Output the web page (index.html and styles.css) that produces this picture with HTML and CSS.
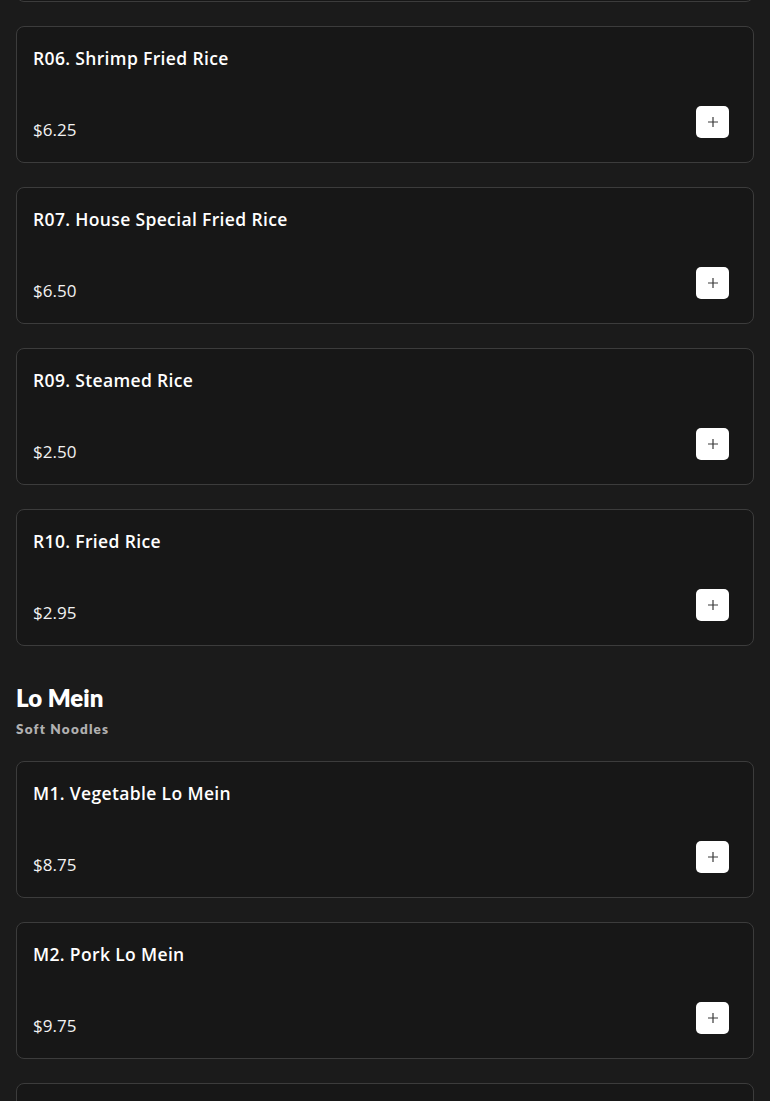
FILE: index.html
```html
<!DOCTYPE html>
<html>
<head>
<meta charset="utf-8">
<link rel="stylesheet" href="styles.css">
</head>
<body>
<main class="menu">
  <section class="section first">
    <div class="list">
      <article class="card">
        <h3 class="name">R05. Beef Fried Rice</h3>
        <div class="row"><span class="price">$6.25</span><button class="add" aria-label="Add"><svg viewBox="0 0 12 12" width="12" height="12"><path d="M6 1v10M1 6h10" stroke="#3a3a3a" stroke-width="1.2" fill="none"/></svg></button></div>
      </article>
      <article class="card">
        <h3 class="name">R06. Shrimp Fried Rice</h3>
        <div class="row"><span class="price">$6.25</span><button class="add" aria-label="Add"><svg viewBox="0 0 12 12" width="12" height="12"><path d="M6 1v10M1 6h10" stroke="#3a3a3a" stroke-width="1.2" fill="none"/></svg></button></div>
      </article>
      <article class="card">
        <h3 class="name">R07. House Special Fried Rice</h3>
        <div class="row"><span class="price">$6.50</span><button class="add" aria-label="Add"><svg viewBox="0 0 12 12" width="12" height="12"><path d="M6 1v10M1 6h10" stroke="#3a3a3a" stroke-width="1.2" fill="none"/></svg></button></div>
      </article>
      <article class="card">
        <h3 class="name">R09. Steamed Rice</h3>
        <div class="row"><span class="price">$2.50</span><button class="add" aria-label="Add"><svg viewBox="0 0 12 12" width="12" height="12"><path d="M6 1v10M1 6h10" stroke="#3a3a3a" stroke-width="1.2" fill="none"/></svg></button></div>
      </article>
      <article class="card">
        <h3 class="name">R10. Fried Rice</h3>
        <div class="row"><span class="price">$2.95</span><button class="add" aria-label="Add"><svg viewBox="0 0 12 12" width="12" height="12"><path d="M6 1v10M1 6h10" stroke="#3a3a3a" stroke-width="1.2" fill="none"/></svg></button></div>
      </article>
    </div>
  </section>
  <section class="section">
    <header class="section-head">
      <h2 class="section-title">Lo Mein</h2>
      <p class="section-sub">Soft Noodles</p>
    </header>
    <div class="list">
      <article class="card">
        <h3 class="name">M1. Vegetable Lo Mein</h3>
        <div class="row"><span class="price">$8.75</span><button class="add" aria-label="Add"><svg viewBox="0 0 12 12" width="12" height="12"><path d="M6 1v10M1 6h10" stroke="#3a3a3a" stroke-width="1.2" fill="none"/></svg></button></div>
      </article>
      <article class="card">
        <h3 class="name">M2. Pork Lo Mein</h3>
        <div class="row"><span class="price">$9.75</span><button class="add" aria-label="Add"><svg viewBox="0 0 12 12" width="12" height="12"><path d="M6 1v10M1 6h10" stroke="#3a3a3a" stroke-width="1.2" fill="none"/></svg></button></div>
      </article>
      <article class="card">
        <h3 class="name">M3. Chicken Lo Mein</h3>
        <div class="row"><span class="price">$9.75</span><button class="add" aria-label="Add"><svg viewBox="0 0 12 12" width="12" height="12"><path d="M6 1v10M1 6h10" stroke="#3a3a3a" stroke-width="1.2" fill="none"/></svg></button></div>
      </article>
    </div>
  </section>
</main>
</body>
</html>
```
FILE: styles.css
```css
* { box-sizing: border-box; }
html, body { margin: 0; padding: 0; background: #1b1b1b; }
body { font-family: "Open Sans", "Liberation Sans", sans-serif; color: #fff; }
.menu { padding: 0 16px; margin-top: -135px; display: flex; flex-direction: column; gap: 38px; }
.list { display: flex; flex-direction: column; gap: 24px; }
.card {
  background: #171717;
  border: 1px solid #3c3c3c;
  border-radius: 8px;
  height: 137px;
  padding: 19px 24px 23px 16px;
  display: flex;
  flex-direction: column;
  justify-content: space-between;
}
.name { margin: 0; font-size: 17.5px; font-weight: 600; line-height: 24px; letter-spacing: 0.35px; }
.row { display: flex; justify-content: space-between; align-items: flex-end; }
.price { font-size: 17px; line-height: 18px; font-weight: 400; color: #f2f2f2; }
.add {
  width: 33px; height: 32px; border: 0; border-radius: 5px; background: #fff;
  display: flex; align-items: center; justify-content: center; padding: 0; margin-bottom: 1px;
}
.add svg { display: block; }
.section-head { display: flex; flex-direction: column; gap: 8px; margin-bottom: 23px; }
.section-title { margin: 0; font-family: "Lato", sans-serif; font-size: 24px; font-weight: 800; line-height: 28px; }
.section-sub { margin: 0; font-family: "Lato", sans-serif; font-size: 13.5px; font-weight: 800; color: #b0b0b0; letter-spacing: 1.2px; line-height: 18px; }
```
